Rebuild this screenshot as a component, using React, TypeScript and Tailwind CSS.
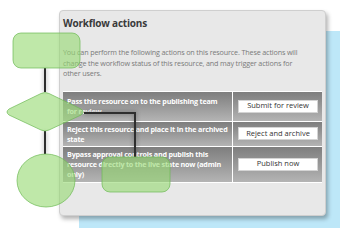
import React from 'react';

const rows = [
  { text: 'Pass this resource on to the publishing team for review', action: 'Submit for review', h: 'h-[30px]' },
  { text: 'Reject this resource and place it in the archived state', action: 'Reject and archive', h: 'h-[25px]' },
  {
    text: 'Bypass approval controls and publish this resource directly to the live state now (admin only)',
    action: 'Publish now',
    h: 'h-[36px]',
  },
];

// Flowchart overlay drawn on top of the dialog
function Flowchart() {
  const fill = 'rgba(148,217,112,0.6)';
  const stroke = 'rgba(110,185,85,0.7)';
  return (
    <svg className="absolute left-0 top-0 pointer-events-none" width="340" height="245" viewBox="0 0 340 245">
      <defs>
        <filter id="blur" x="-50%" y="-50%" width="200%" height="200%">
          <feGaussianBlur stdDeviation="2" />
        </filter>
      </defs>
      <g stroke="#000" strokeWidth="4" fill="none" opacity="0.2" filter="url(#blur)">
        <path d="M45 68 V92 M45 131 V154 M84 113 H135 V157" />
      </g>
      <g stroke="#2e2e2e" strokeWidth="2" fill="none">
        <path d="M45 68 V92 M45 131 V154 M84 113 H135 V157" />
      </g>
      <g fill={fill} stroke={stroke} strokeWidth="1">
        <rect x="13" y="33" width="67" height="35" rx="8" />
        <path d="M9 109 L41 93.5 Q45 91.5 49 93.5 L81 109 Q85 112 81 115 L49 130 Q45 132 41 130 L9 115 Q5 112 9 109 Z" />
        <ellipse cx="46" cy="180.5" rx="29" ry="26.5" />
        <rect x="102" y="157" width="68" height="35" rx="8" />
      </g>
    </svg>
  );
}

export default function App() {
  return (
    <div className="relative w-[340px] h-[245px] bg-white overflow-hidden" style={{ fontFamily: '"Open Sans", sans-serif' }}>
      {/* backdrop */}
      <div className="absolute left-[79px] top-[31px] w-[261px] h-[197px] bg-[#bde7f8]" />

      {/* dialog */}
      <div className="relative ml-[59px] mt-[10px] w-[267px] h-[206px] bg-[#e8e8e8] border border-[#cfcfcf] rounded-[4px] shadow-[2px_3px_4px_rgba(0,0,0,0.3)] px-[3px]">
        <h2 className="mt-[6px] text-[10px] leading-[12px] font-bold text-[#3a3a3a] tracking-[-0.2px]">
          Workflow actions
        </h2>
        <p className="mt-[18px] text-[7.2px] leading-[10.5px] text-[#7a7a7a] tracking-[-0.15px] whitespace-nowrap">
          You can perform the following actions on this resource. These actions will
          <br />
          change the workflow status of this resource, and may trigger actions for
          <br />
          other users.
        </p>
        <div className="mt-[12px] w-[259px] border-t border-white flex flex-col">
          {rows.map((r) => (
            <div key={r.action} className={`flex border-b border-white ${r.h}`}>
              <div className="w-[170px] flex items-center px-[4px] bg-gradient-to-b from-[#7e7e7e] to-[#b4b4b4] border-r border-white">
                <span className="text-[7.2px] leading-[10px] font-bold text-white tracking-[-0.2px]">{r.text}</span>
              </div>
              <div className="flex-1 flex items-center pl-[5px] pr-[4px] bg-gradient-to-b from-[#7e7e7e] to-[#b4b4b4]">
                <div className="w-full h-[13px] bg-white border border-[#d4d4d4] flex items-center justify-center text-[7.5px] text-[#333]">
                  {r.action}
                </div>
              </div>
            </div>
          ))}
        </div>
      </div>

      <Flowchart />
    </div>
  );
}
